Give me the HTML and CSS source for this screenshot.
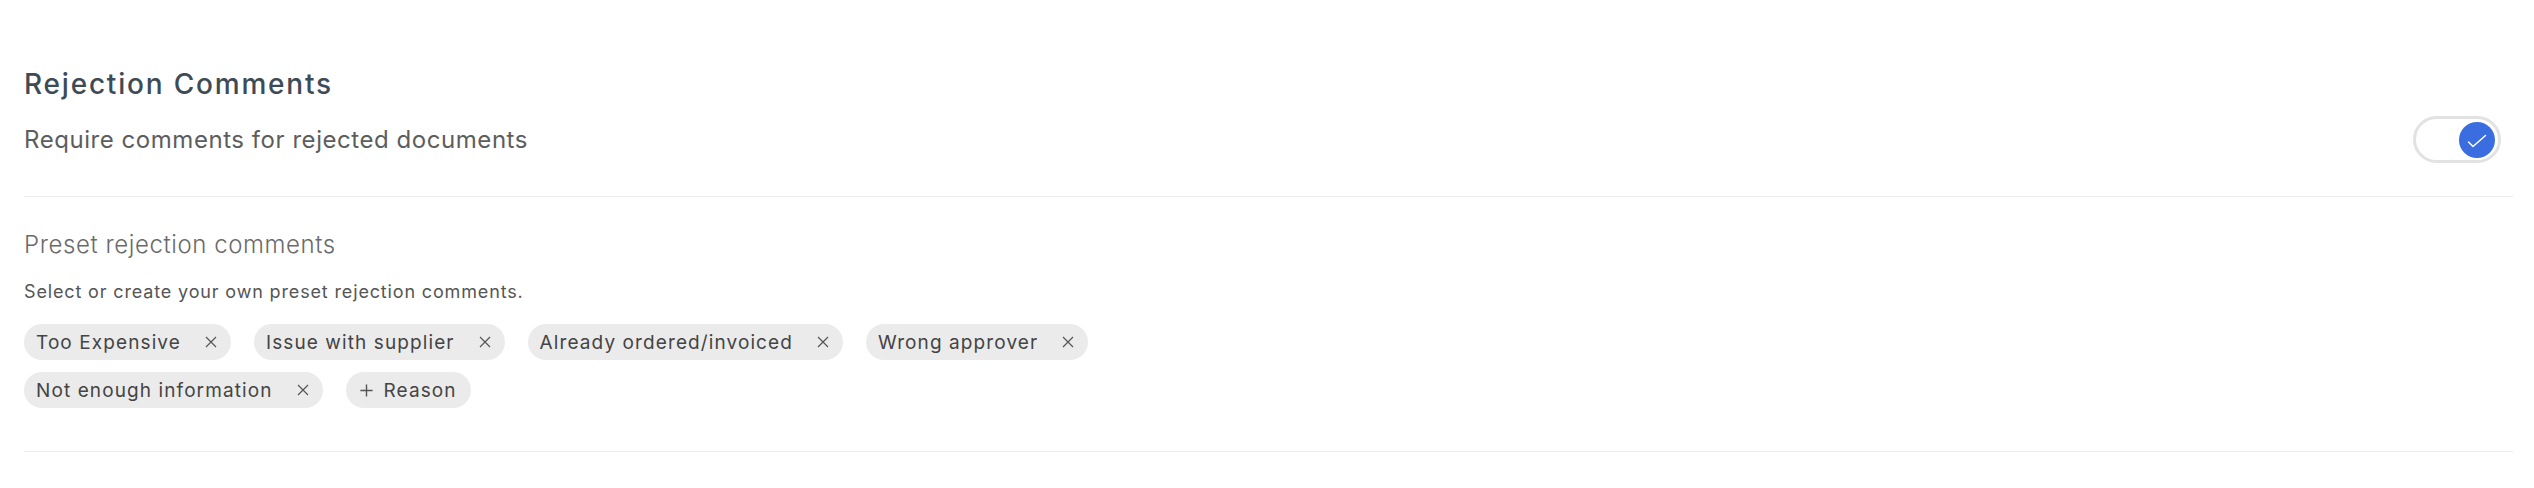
FILE: index.html
```html
<!DOCTYPE html>
<html lang="en">
<head>
<meta charset="utf-8">
<title>Rejection Comments</title>
<link rel="stylesheet" href="styles.css">
</head>
<body>
<main class="settings">
  <section class="block block-top">
    <h2 class="title">Rejection Comments</h2>
    <div class="setting-row">
      <span class="setting-label">Require comments for rejected documents</span>
      <button class="toggle is-on" type="button" aria-pressed="true">
        <span class="knob">
          <svg viewBox="0 0 36 36" width="36" height="36"><path d="M9.5 20 L14 24.5 L26.5 13.5" fill="none" stroke="#fff" stroke-width="1.5" stroke-linecap="round" stroke-linejoin="round"/></svg>
        </span>
      </button>
    </div>
  </section>
  <section class="block block-presets">
    <h3 class="subtitle">Preset rejection comments</h3>
    <p class="hint">Select or create your own preset rejection comments.</p>
    <div class="chips">
      <div class="chip-row">
        <span class="chip">Too Expensive<svg class="chip-x" viewBox="0 0 12 12"><path d="M1 1 L11 11 M11 1 L1 11"/></svg></span>
        <span class="chip">Issue with supplier<svg class="chip-x" viewBox="0 0 12 12"><path d="M1 1 L11 11 M11 1 L1 11"/></svg></span>
        <span class="chip">Already ordered/invoiced<svg class="chip-x" viewBox="0 0 12 12"><path d="M1 1 L11 11 M11 1 L1 11"/></svg></span>
        <span class="chip">Wrong approver<svg class="chip-x" viewBox="0 0 12 12"><path d="M1 1 L11 11 M11 1 L1 11"/></svg></span>
      </div>
      <div class="chip-row">
        <span class="chip">Not enough information<svg class="chip-x" viewBox="0 0 12 12"><path d="M1 1 L11 11 M11 1 L1 11"/></svg></span>
        <span class="chip chip-add"><svg class="chip-plus" viewBox="0 0 16 16"><path d="M8 1.5 V14.5 M1.5 8 H14.5"/></svg>Reason</span>
      </div>
    </div>
  </section>
</main>
</body>
</html>
```

FILE: styles.css
```css
* { box-sizing: border-box; }

html, body {
  margin: 0;
  padding: 0;
  background: #ffffff;
}

body {
  font-family: "Inter", "Open Sans", "Liberation Sans", sans-serif;
  color: #444;
}

.settings {
  padding: 0 21px 0 24px;
}

.block {
  border-bottom: 1px solid #ebebef;
}

.block-top {
  padding-top: 64px;
  padding-bottom: 33px;
}

.title {
  margin: 0;
  font-size: 28px;
  line-height: 40px;
  font-weight: 500;
  color: #3e4b56;
  letter-spacing: 1.8px;
}

.setting-row {
  display: flex;
  align-items: center;
  justify-content: space-between;
  margin-top: 12px;
}

.setting-label {
  font-size: 24px;
  line-height: 32px;
  font-weight: 400;
  color: #5d5d5d;
  letter-spacing: 0.55px;
}

.toggle {
  width: 88px;
  height: 47px;
  margin-right: 12px;
  padding: 0 3px;
  border: 3px solid #e2e2e2;
  border-radius: 24px;
  background: #fff;
  display: flex;
  align-items: center;
  justify-content: flex-end;
  cursor: pointer;
}

.knob {
  width: 36px;
  height: 36px;
  border-radius: 50%;
  background: #3a6ee0;
  display: flex;
  align-items: center;
  justify-content: center;
}

.block-presets {
  padding-top: 30px;
  padding-bottom: 43px;
}

.subtitle {
  margin: 0;
  font-size: 24px;
  line-height: 36px;
  font-weight: 300;
  color: #6a6a6a;
  letter-spacing: 0.58px;
}

.hint {
  margin: 15px 0 0;
  font-size: 18px;
  line-height: 28px;
  color: #555;
  letter-spacing: 0.85px;
}

.chips {
  display: flex;
  flex-direction: column;
  gap: 12px;
  margin-top: 18px;
}

.chip-row {
  display: flex;
  gap: 23px;
}

.chip {
  display: inline-flex;
  align-items: center;
  height: 36px;
  padding: 0 14px 0 12px;
  border-radius: 18px;
  background: #ebebeb;
  font-size: 19px;
  letter-spacing: 1.1px;
  color: #444;
  white-space: nowrap;
}

.chip-x {
  width: 12px;
  height: 12px;
  margin-left: 24px;
  fill: none;
  stroke: #555;
  stroke-width: 1.2;
}

.chip-add {
  padding-left: 13px;
}

.chip-plus {
  width: 15px;
  height: 15px;
  margin-right: 10px;
  fill: none;
  stroke: #555;
  stroke-width: 1.5;
}
```
